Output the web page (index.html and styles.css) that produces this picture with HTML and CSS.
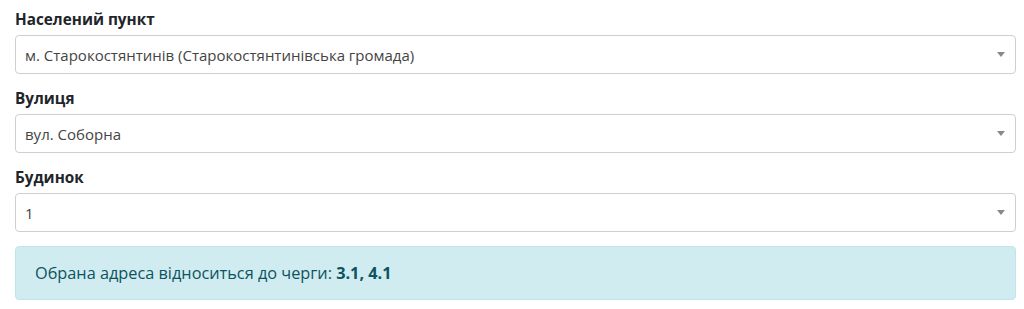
FILE: index.html
```html
<!DOCTYPE html>
<html>
  <head>
    <title>Черги відключень</title>
    <meta charset="UTF-8" />
    <link rel="stylesheet" href="styles.css">
  </head>

  <body>
    <div class="container">
      <div class="form-group">
        <label class="form-label">Населений пункт</label>
        <div class="select">
          <span class="select-value">м. Старокостянтинів (Старокостянтинівська громада)</span>
          <span class="select-arrow"></span>
        </div>
      </div>
      <div class="form-group">
        <label class="form-label">Вулиця</label>
        <div class="select">
          <span class="select-value">вул. Соборна</span>
          <span class="select-arrow"></span>
        </div>
      </div>
      <div class="form-group">
        <label class="form-label">Будинок</label>
        <div class="select">
          <span class="select-value">1</span>
          <span class="select-arrow"></span>
        </div>
      </div>
      <div class="alert-info">
        Обрана адреса відноситься до черги: <b>3.1, 4.1</b>
      </div>
    </div>
  </body>
</html>
```

FILE: styles.css
```css
* {
  box-sizing: border-box;
}

body {
  margin: 0;
  font-family: "Open Sans", sans-serif;
  font-size: 15px;
  color: #212529;
  background: #ffffff;
}

.container {
  padding: 9px 8px 0 15px;
}

.form-group {
  margin-bottom: 14px;
}

.form-label {
  display: block;
  font-weight: 700;
  font-size: 15.3px;
  line-height: 21px;
  margin-bottom: 5px;
}

.select {
  display: flex;
  align-items: center;
  justify-content: space-between;
  height: 39px;
  padding: 0 10px 0 9px;
  border: 1px solid #cfcfcf;
  border-radius: 4px;
  color: #444444;
}

.select-arrow {
  width: 0;
  height: 0;
  border-style: solid;
  border-width: 5px 4px 0 4px;
  border-color: #888888 transparent transparent transparent;
}

.alert-info {
  margin-top: 1px;
  padding: 15px 19px;
  line-height: 22px;
  background-color: #d1ecf1;
  border: 1px solid #bee5eb;
  border-radius: 4px;
  color: #0c5460;
  font-size: 16.3px;
}
```
